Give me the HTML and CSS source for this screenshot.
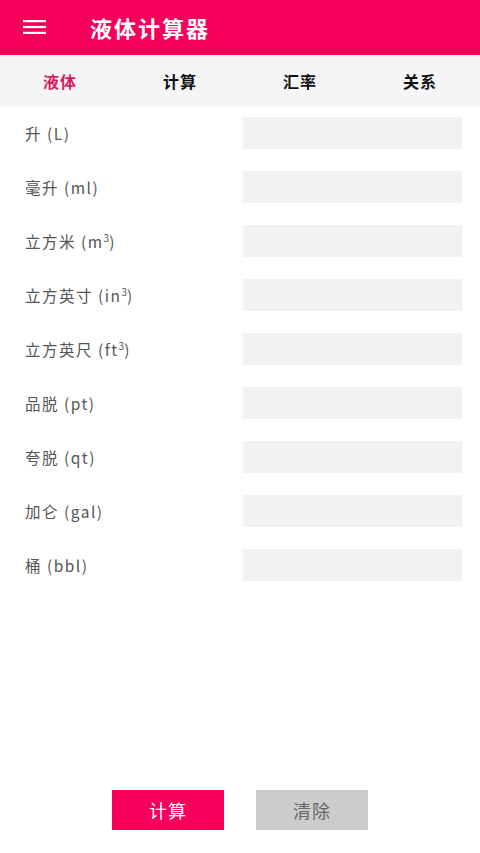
FILE: index.html
```html
<!DOCTYPE html>
<html lang="zh-CN">
<head>
<meta charset="utf-8">
<title>液体计算器</title>
<link rel="stylesheet" href="styles.css">
</head>
<body>
<div class="app">
  <header class="topbar">
    <svg class="menu" width="23" height="14" viewBox="0 0 23 14"><rect x="0" y="0" width="23" height="2.2" fill="#fff"/><rect x="0" y="5.9" width="23" height="2.2" fill="#fff"/><rect x="0" y="11.8" width="23" height="2.2" fill="#fff"/></svg>
    <h1 class="title">液体计算器</h1>
  </header>
  <nav class="tabs">
    <div class="tab active">液体</div>
    <div class="tab">计算</div>
    <div class="tab">汇率</div>
    <div class="tab">关系</div>
  </nav>
  <main class="list">
    <div class="row"><span class="label">升 (L)</span><div class="field"></div></div>
    <div class="row"><span class="label">毫升 (ml)</span><div class="field"></div></div>
    <div class="row"><span class="label">立方米 (m<sup>3</sup>)</span><div class="field"></div></div>
    <div class="row"><span class="label">立方英寸 (in<sup>3</sup>)</span><div class="field"></div></div>
    <div class="row"><span class="label">立方英尺 (ft<sup>3</sup>)</span><div class="field"></div></div>
    <div class="row"><span class="label">品脱 (pt)</span><div class="field"></div></div>
    <div class="row"><span class="label">夸脱 (qt)</span><div class="field"></div></div>
    <div class="row"><span class="label">加仑 (gal)</span><div class="field"></div></div>
    <div class="row"><span class="label">桶 (bbl)</span><div class="field"></div></div>
  </main>
  <footer class="actions">
    <button class="btn primary">计算</button>
    <button class="btn secondary">清除</button>
  </footer>
</div>
</body>
</html>
```
FILE: styles.css
```css
* { box-sizing: border-box; }
html, body { margin: 0; padding: 0; background: #fff; }
body { font-family: "Noto Sans CJK SC", "Noto Sans", sans-serif; }
.app { min-height: 853px; display: flex; flex-direction: column; }
.topbar {
  height: 55px;
  background: #F5005A;
  display: flex;
  align-items: center;
  padding-left: 23px;
}
.menu { display: block; margin-top: -2px; }
.title {
  margin: -2px 0 0 44px;
  color: #fff;
  font-size: 22px;
  font-weight: 700;
  letter-spacing: 2px;
  line-height: 1;
}
.tabs {
  height: 52px;
  background: #F5F5F7;
  display: grid;
  grid-template-columns: repeat(4, 1fr);
  align-items: center;
}
.tab {
  text-align: center;
  font-size: 16px;
  font-weight: 700;
  color: #111;
  letter-spacing: 1px;
}
.tab.active { color: #D81B60; }
.list {
  padding: 10px 18px 0 25px;
  display: flex;
  flex-direction: column;
  gap: 22px;
}
.row {
  display: flex;
  align-items: center;
  justify-content: space-between;
  height: 32px;
}
.label {
  font-size: 15.5px;
  color: #555;
  letter-spacing: 1.5px;
}
.label sup { font-size: 10px; vertical-align: 6px; line-height: 0; letter-spacing: 0; }
.field {
  width: 219px;
  height: 32px;
  background: #F2F2F2;
}
.actions {
  margin-top: auto;
  display: flex;
  justify-content: center;
  gap: 32px;
  padding-bottom: 23px;
}
.btn {
  width: 112px;
  height: 40px;
  border: none;
  font-family: "Noto Sans CJK SC", sans-serif;
  font-size: 18px;
  letter-spacing: 1px;
  padding: 0;
}
.btn.primary { background: #F5005A; color: #fff; }
.btn.secondary { background: #CCCCCC; color: #666; }
```
